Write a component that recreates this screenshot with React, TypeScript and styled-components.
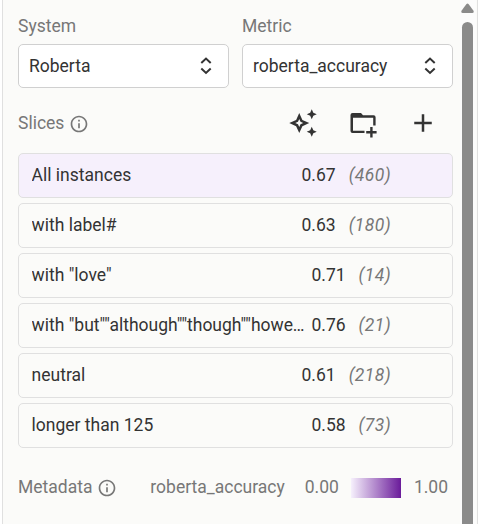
import React from "react";
import styled, { createGlobalStyle } from "styled-components";

const GlobalStyle = createGlobalStyle`
  * { box-sizing: border-box; }
  body {
    margin: 0;
    background: #fff;
    font-family: Roboto, "Liberation Sans", sans-serif;
    font-size: 17.5px;
    line-height: 24px;
    color: #333;
    overflow: hidden;
  }
`;

const Panel = styled.div`
  display: flex;
  width: 476px;
  height: 524px;
  margin-left: 2px;
  background: #fbfbf9;
  border: solid #e0e0e0;
  border-width: 0 1px;
  overflow: hidden;
`;

const Content = styled.main`
  width: 450px;
  flex: none;
  padding: 14px 0 0 15px;
`;

const Fields = styled.div`
  display: grid;
  grid-template-columns: 211px 211px;
  column-gap: 13px;
`;

const Label = styled.div`
  color: #777;
  height: 30px;
`;

const Select = styled.div`
  display: flex;
  align-items: center;
  justify-content: space-between;
  height: 44px;
  padding: 0 14px 0 10px;
  background: #fff;
  border: 1px solid #d0d0d0;
  border-radius: 5px;
`;

const Header = styled.div`
  display: flex;
  align-items: center;
  height: 65px;
  padding-top: 5px;
  color: #777;
`;

const InfoIcon = styled.svg`
  width: 20px;
  height: 20px;
  margin: 1px 0 0 5px;
  fill: #777;
`;

const Tools = styled.div`
  display: flex;
  gap: 30px;
  margin-left: auto;
  padding-right: 15px;
  color: #333;
`;

const ToolIcon = styled.svg`
  display: block;
  width: 30px;
  height: 30px;
  fill: currentColor;
`;

const SliceList = styled.div`
  display: flex;
  flex-direction: column;
  gap: 5px;
  width: 435px;
`;

const Slice = styled.div<{ $selected?: boolean }>`
  display: flex;
  align-items: center;
  height: 45px;
  padding: 0 61px 2px 12.6px;
  border: 1px solid #e0e0e0;
  border-radius: 5px;
  background: ${(p) => (p.$selected ? "#f6f0fc" : "transparent")};
`;

const SliceName = styled.span`
  flex: 1;
  min-width: 0;
  overflow: hidden;
  white-space: nowrap;
  text-overflow: ellipsis;
`;

const Score = styled.span`
  margin-left: 5px;
`;

const Count = styled.span`
  margin-left: 13px;
  font-style: italic;
  letter-spacing: 0.4px;
  color: #777;
`;

const Metadata = styled.div`
  display: flex;
  align-items: center;
  width: 435px;
  margin-top: 27px;
  color: #777;
`;

const Legend = styled.div`
  display: flex;
  align-items: center;
  margin-left: auto;
  padding-right: 5px;
`;

const MetricName = styled.span`
  margin-right: 20px;
`;

const Gradient = styled.div`
  width: 50px;
  height: 20px;
  margin: 2px 13px 0 12px;
  background: linear-gradient(to right, #f6f0fc, #6a1b9a);
`;

const Scrollbar = styled.div`
  display: flex;
  flex-direction: column;
  align-items: center;
  width: 16px;
  padding-top: 3px;
  padding-right: 1px;
  margin-left: 7px;
  background: #fcfcfc;
`;

const Arrow = styled.svg`
  flex: none;
  width: 13px;
  height: 10px;
  fill: #8b8b8b;
`;

const Thumb = styled.div`
  flex: 1;
  width: 11px;
  margin-top: 9px;
  border-radius: 6px 6px 0 0;
  background: #8b8b8b;
`;

const Chevrons = styled.svg`
  width: 14px;
  height: 20px;
  margin-right: 1px;
  fill: none;
  stroke: #333;
  stroke-width: 2;
`;

const slices = [
  { name: "All instances", score: "0.67", count: 460 },
  { name: "with label#", score: "0.63", count: 180 },
  { name: 'with "love"', score: "0.71", count: 14 },
  { name: 'with "but""although""though""however"', score: "0.76", count: 21 },
  { name: "neutral", score: "0.61", count: 218 },
  { name: "longer than 125", score: "0.58", count: 73 },
];

const Info = () => (
  <InfoIcon viewBox="0 0 24 24">
    <path d="M11 7h2v2h-2zm0 4h2v6h-2zm1-9C6.48 2 2 6.48 2 12s4.48 10 10 10 10-4.48 10-10S17.52 2 12 2zm0 18c-4.41 0-8-3.59-8-8s3.59-8 8-8 8 3.59 8 8-3.59 8-8 8z" />
  </InfoIcon>
);

const Dropdown = ({ label, value }: { label: string; value: string }) => (
  <div>
    <Label>{label}</Label>
    <Select>
      {value}
      <Chevrons viewBox="0 0 14 20">
        <path d="M2.3 7 7 2.6 11.7 7M2.3 12.6 7 17 11.7 12.6" />
      </Chevrons>
    </Select>
  </div>
);

export default function App() {
  return (
    <>
      <GlobalStyle />
      <Panel>
        <Content>
          <Fields>
            <Dropdown label="System" value="Roberta" />
            <Dropdown label="Metric" value="roberta_accuracy" />
          </Fields>
          <Header>
            Slices
            <Info />
            <Tools>
              <ToolIcon viewBox="0 0 24 24">
                <path d="M19 9l1.25-2.75L23 5l-2.75-1.25L19 1l-1.25 2.75L15 5l2.75 1.25L19 9zm0 6l-1.25 2.75L15 19l2.75 1.25L19 23l1.25-2.75L23 19l-2.75-1.25L19 15zm-7.5-5.5L9 4 6.5 9.5 1 12l5.5 2.5L9 20l2.5-5.5L17 12l-5.5-2.5zm-1.51 3.49L9 15.17l-.99-2.18L5.83 12l2.18-.99L9 8.83l.99 2.18 2.18.99-2.18.99z" />
              </ToolIcon>
              <ToolIcon viewBox="-1 0 30 30">
                <path d="M3.5 5Q1.5 5 1.5 7V23Q1.5 25 3.5 25H15.5V22.7H4V9.7H24.2V17.5H26.6V9.3Q26.6 7.3 24.6 7.3H14L12 5Z" />
                <path d="M21.2 19h2.4v4h4v2.4h-4v4h-2.4v-4h-4v-2.4h4z" />
              </ToolIcon>
              <ToolIcon viewBox="0 0 24 24">
                <path d="M19 13h-6v6h-2v-6H5v-2h6V5h2v6h6v2z" />
              </ToolIcon>
            </Tools>
          </Header>
          <SliceList>
            {slices.map((s, i) => (
              <Slice key={s.name} $selected={i === 0}>
                <SliceName>{s.name}</SliceName>
                <Score>{s.score}</Score>
                <Count>({s.count})</Count>
              </Slice>
            ))}
          </SliceList>
          <Metadata>
            Metadata
            <Info />
            <Legend>
              <MetricName>roberta_accuracy</MetricName>
              0.00
              <Gradient />
              1.00
            </Legend>
          </Metadata>
        </Content>
        <Scrollbar>
          <Arrow viewBox="0 0 13 10">
            <path d="M5.5 1Q6.5 0 7.5 1L12.7 8Q13 10 11.5 10H1.5Q0 10 .3 8Z" />
          </Arrow>
          <Thumb />
        </Scrollbar>
      </Panel>
    </>
  );
}
